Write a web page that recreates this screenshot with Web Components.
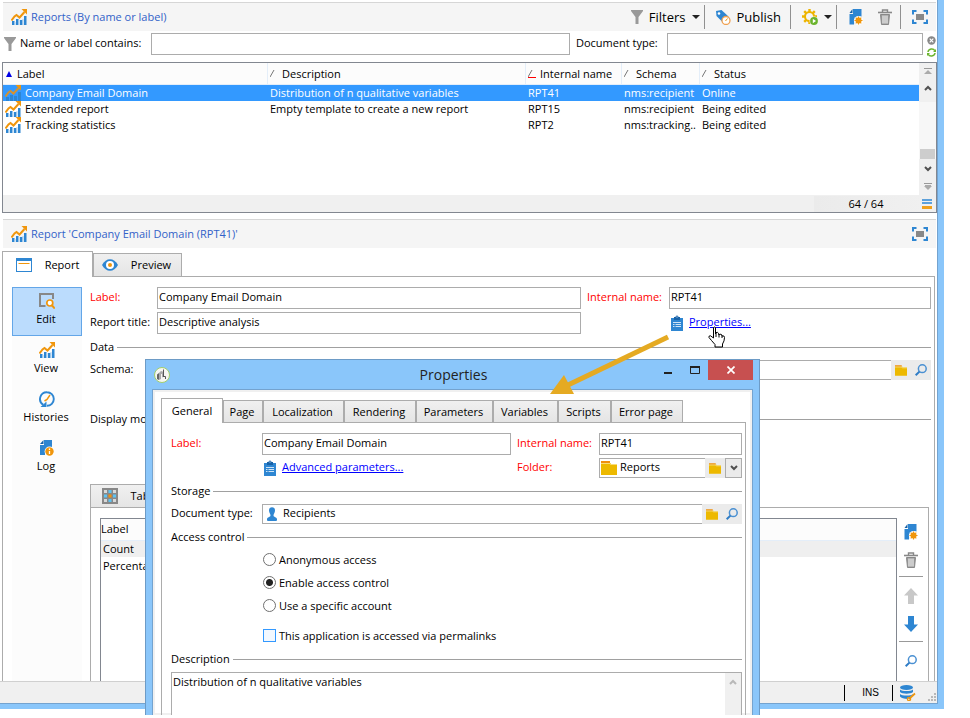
<!DOCTYPE html>
<html lang="en">
<head>
<meta charset="utf-8">
<title>Reports</title>
<style>
  html, body { margin: 0; height: 100%; background: #fff; }
  body { overflow: hidden; font: 11px/16px "Open Sans", "Noto Sans", sans-serif; color: #000; }
</style>
</head>
<body>
<report-app></report-app>

<script>
const ICONS = {
  chart: [16, 16, '<path d="M1 12h2.500v4H1zM5 10h2.500v6H5zM9 11h2.500v5H9zM13 7h2.500v9H13z" fill="#2e86d2"/><path d="M3.500 13h1v3h-1zM7.500 11h1v5h-1zM11.500 10h1v6h-1z" fill="#a9d0f0"/><path d="M.5 11.500 3.500 7.500 5.500 6 8.500 8.500 13.500 3" fill="none" stroke="#f0960c" stroke-width="2"/><path d="M10.500 0H16v5.500z" fill="#f0960c"/>'],
  chartsel: [16, 16, '<path d="M1 12h3v4H1zM5 10h3v6H5zM9 11h3v5H9zM13 7h3v9h-3z" fill="#2e86d2"/><path d="M.5 11.500 3.500 7.500 5.500 6 8.500 8.500 13.500 3" fill="none" stroke="#d8922c" stroke-width="2"/><path d="M10.500 0H16v5.500z" fill="#f0960c"/>'],
  funnel: [12, 14, '<path d="M0 0h12v1L7.500 7v7h-3V7L0 1z" fill="#999"/>'],
  tag: [16, 16, '<path d="M1 2 6.500 1 13.500 7.500 8 13.500 1.500 7z" fill="#2e86d2"/><circle cx="4" cy="4.500" r="1.300" fill="#fff"/><circle cx="11" cy="11.500" r="4" fill="#fff" stroke="#f0a050" stroke-width="1.300"/><path d="M10.500 12 12.500 9.500" stroke="#f0960c"/>'],
  gear: [16, 16, '<circle cx="7.500" cy="7.500" r="4.500" fill="none" stroke="#edb400" stroke-width="2"/><path d="M7.500 0v3M7.500 12v3M0 7.500h3M12 7.500h3M2.200 2.200l2 2M12.800 2.200l-2 2M2.200 12.800l2-2" stroke="#edb400" stroke-width="2.400"/><circle cx="12" cy="12" r="4.500" fill="#f5f5f5"/><circle cx="12" cy="12" r="3.900" fill="#6ab42d"/><path d="M10.800 9.800 14 12l-3.200 2.200z" fill="#fff"/>'],
  newdoc: [14, 16, '<path d="M4 0h8.500v7.500H9L5.500 10 5 15.500H.5V5H4z" fill="#2e86d2"/><path d="M.5 4 3.500 0v4z" fill="#1762a8"/><circle cx="9.500" cy="11.500" r="4.600" fill="#fff"/><circle cx="9.500" cy="11.500" r="3" fill="#f0960c"/><path d="M9.500 7.500v8M5.500 11.500h8M6.700 8.700l5.600 5.600M12.300 8.700l-5.600 5.600" stroke="#f0960c" stroke-width="1.200"/>'],
  trash: [14, 16, '<path d="M4.500 3V1h5v2" fill="none" stroke="#888" stroke-width="1.400"/><path d="M0 3.500h14" stroke="#888" stroke-width="1.600"/><path d="M2.500 5.500h9l-1 10h-7z" fill="#999" stroke="#888"/><path d="M5 6.500v8M7 6.500v8M9 6.500v8" stroke="#fff"/>'],
  full: [16, 14, '<path d="M1 4.500V1h3.500M11.500 1H15v3.500M15 9.500V13h-3.500M4.500 13H1V9.500" fill="none" stroke="#2e86d2" stroke-width="2"/><path d="M4 4h8v6H4z" fill="#888"/>'],
  clear: [9, 9, '<circle cx="4.500" cy="4.500" r="4.200" fill="#888"/><path d="m2.700 2.700 3.600 3.600M6.300 2.700 2.700 6.300" stroke="#fff" stroke-width="1.200"/>'],
  refresh: [9, 9, '<path d="M1 4C1.500.5 6.500 0 7.800 2.800M8 5C7.500 8.500 2.500 9 1.200 6.200" fill="none" stroke="#6ab42d" stroke-width="1.500"/><path d="M9 1v3H6zM0 8V5h3z" fill="#6ab42d"/>'],
  window: [16, 14, '<rect x=".5" y=".5" width="15" height="13" fill="#fff" stroke="#2e86d2"/><path d="M0 0h16v3H0z" fill="#2e86d2"/><path d="M2.500 5.500h11" stroke="#f0960c"/>'],
  eye: [16, 12, '<path d="M0 6C4-1.700 12-1.700 16 6 12 13.700 4 13.700 0 6z" fill="#2e86d2"/><circle cx="8" cy="6" r="4" fill="#fff"/><circle cx="8" cy="6" r="2" fill="#f0960c"/>'],
  editdoc: [16, 16, '<path d="M6.500 13H1V1h13v5" fill="none" stroke="#888" stroke-width="2"/><circle cx="10.800" cy="10" r="3" fill="#fff" stroke="#f0960c" stroke-width="1.700"/><path d="m13 12.500 2.800 3" stroke="#f0960c" stroke-width="2"/>'],
  history: [16, 16, '<path d="M4.300 13.800A6.800 6.800 0 0 1 8 1.200M8 1.200a6.800 6.800 0 0 1 0 13.600" fill="none" stroke="#2e86d2" stroke-width="1.900"/><path d="M1.500 16h6v-5.500z" fill="#2e86d2"/><path d="M11 4 8 8.500 5.500 10" fill="none" stroke="#f0960c" stroke-width="1.500"/>'],
  log: [14, 16, '<path d="M4 0h8v7H9L5.500 9.500 5 15H0V5h4z" fill="#2e86d2"/><path d="M0 4 3.500 0v4z" fill="#1762a8"/><circle cx="9.500" cy="11.500" r="4.900" fill="#fff"/><circle cx="9.500" cy="11.500" r="4.200" fill="#f0960c"/><path d="M9.500 8.500V10M9.500 11v3" stroke="#fff" stroke-width="1.300"/>'],
  clipboard: [12, 16, '<path d="M0 3h12v13H0z" fill="#2e86d2"/><path d="M3 2h1.500a1.500 1.500 0 0 1 3 0H9v3H3z" fill="#1762a8"/><path d="M5.500 1.500h1v1h-1z" fill="#fff"/><path d="M2 7.500h8M4.500 9.500H10M4.500 11.500H10M2 9.500h1.500M2 11.500h1.500" stroke="#cfe4f6"/>'],
  folder: [16, 14, '<path d="M0 0h9v2H0z" fill="#f0900c"/><path d="M0 2h10v1h6v11H0z" fill="#edb900"/><path d="M0 2.500h9.500v1H16" fill="none" stroke="#f8dc78"/>'],
  search: [12, 12, '<circle cx="7.300" cy="4.700" r="3.900" fill="none" stroke="#4a90d2" stroke-width="1.500"/><path d="M4.400 7.600.7 11.300" stroke="#2e7cc6" stroke-width="2"/>'],
  user: [10, 14, '<path d="M2 3.500a3 3.300 0 0 1 6 0C8 6 6.500 6.500 6.500 8.500c0 1.500 3 1.500 3.500 3.500V13q0 1-1 1H1q-1 0-1-1v-1C.5 10 3.500 10 3.500 8.500 3.500 6.500 2 6 2 3.500z" fill="#2e86d2"/>'],
  grid: [16, 16, '<path d="M0 0h16v16H0z" fill="#888"/><path d="M2 2h3v3H2zM11 2h3v3h-3zM2 11h3v3H2zM11 11h3v3h-3z" fill="#d8d8d8"/><path d="M6.500 2h3v3h-3zM2 6.500h3v3H2zM11 6.500h3v3h-3zM6.500 11h3v3h-3z" fill="#5cc4f4"/><path d="M6.500 6.500h3v3h-3z" fill="#f0900c"/>'],
  up: [14, 16, '<path d="M7 0l7 7.500h-4V16H4V7.500H0z" fill="#c8c8c8"/>'],
  down: [14, 16, '<path d="M7 16 0 8.500h4V0h6v8.500h4z" fill="#2e86d2"/>'],
  db: [16, 16, '<ellipse cx="6.500" cy="2.500" rx="6.500" ry="2.500" fill="#2e86d2"/><path d="M0 4.500c2 2 11 2 13 0v2.500c-2 2.300-11 2.300-13 0zM0 9c2 2 11 2 13 0v.5l-5 4.500C4 14 1 13 0 11.500z" fill="#2e86d2"/><path d="m9 14 6-5.500" stroke="#f0960c" stroke-width="1.700"/><circle cx="9" cy="14" r="1.600" fill="none" stroke="#f0960c" stroke-width="1.300"/>'],
  grip: [9, 9, '<path d="M6 0h2v2H6zM3 3h2v2H3zM6 3h2v2H6zM0 6h2v2H0zM3 6h2v2H3zM6 6h2v2H6z" fill="#b8b8b8"/>'],
  caret: [8, 4, '<path d="M0 0h8L4 4z" fill="#222"/>'],
  chevdown: [8, 6, '<path d="m1 1 3 3 3-3" fill="none" stroke="#505050" stroke-width="2"/>'],
  chevup: [8, 6, '<path d="m1 5 3-3 3 3" fill="none" stroke="#505050" stroke-width="2"/>'],
  chevupoff: [8, 6, '<path d="m1 5 3-3 3 3" fill="none" stroke="#b8b8b8" stroke-width="2"/>'],
  totop: [8, 6, '<path d="M0 .5h8" stroke="#999"/><path d="M0 6h8L4 2z" fill="#aaa"/>'],
  tobottom: [8, 7, '<path d="M0 .5h8" stroke="#999"/><path d="M1 2h6v1l1 0-4 4-4-4h1z" fill="#aaa"/>'],
  lines: [10, 10, '<path d="M0 1h10M0 4h10" stroke="#2e86d2" stroke-width="1.600"/><path d="M0 7h10v3H0z" fill="#f0a01c"/>'],
  sortasc: [6, 6, '<path d="M3 0l3 6H0z" fill="#0000e6"/>'],
  sort: [8, 8, '<path d="M0 7 4 0" stroke="#777"/>'],
  sortred: [8, 8, '<path d="M0 7 4 0" stroke="#777"/><path d="M0 7h8v1H0z" fill="#f00"/>'],
  app: [16, 16, '<circle cx="8" cy="8" r="7.500" fill="#f6f6f2" stroke="#a3cf6a"/><path d="M3 7.500 5 6v7l-2-1z" fill="#666"/><path d="M5 6q1-2 3-2l1 1v5l-1 .5V7H7v5l-2 1z" fill="#aaa"/><path d="M9.500 2.500V10M9 9.500h2.500V12" fill="none" stroke="#555"/>'],
  min: [8, 8, '<path d="M0 6h8v2H0z" fill="#222"/>'],
  max: [10, 8, '<path d="M.5 1h9v6.500h-9z" fill="none" stroke="#222"/><path d="M0 0h10v2H0z" fill="#222"/>'],
  close: [8, 8, '<path d="m.5.5 7 7M7.500.5l-7 7" stroke="#fff" stroke-width="1.700"/>'],
  hand: [18, 22, '<path d="M5.500 1.500q1.300-1 2 0V8l.5-1.500q2-.5 2.500.8L11 9q.5-1.500 2.500-.5l.5 1.500q2.500-.8 2.500 1.500 0 3.500-2 6.500v3H7v-2.500Q3 14 1 11.500.5 9.500 2.500 9.800L5.500 12z" fill="#fff" stroke="#000"/><path d="M8 7v4M11 8v3.500M14 9.500V12" stroke="#000"/>']
};

function define(name, html, setup) {
  const tpl = document.createElement('template');
  tpl.innerHTML = html;
  customElements.define(name, class extends HTMLElement {
    connectedCallback() {
      if (this.shadowRoot) return;
      const root = this.attachShadow({ mode: 'open' });
      root.append(tpl.content.cloneNode(true));
      if (setup) setup(this, root);
    }
  });
}
const BOX = '*, *::before { box-sizing: border-box; } button { font: inherit; color: inherit; border: 0; padding: 0; background: none; }';

define('app-icon', '<style>:host { display: inline-flex; flex: none; } svg { display: block; }</style>', (el, root) => {
  const [w, h, body] = ICONS[el.getAttribute('name')];
  const s = Number(el.getAttribute('width')) || w;
  root.innerHTML += `<svg width="${s}" height="${Math.round(h * s / w)}" viewBox="0 0 ${w} ${h}" aria-hidden="true">${body}</svg>`;
});

define('panel-bar', `<style>${BOX}
  :host { display: flex; align-items: center; height: 29px; margin: 0 1px 0 3px; padding: 0 8px; box-sizing: border-box; border-top: 1px solid #d6d6d6; background: #f5f5f5; }
  h2 { margin: 0 auto 0 4px; font: inherit; color: #3262c8; white-space: nowrap; }
  </style><app-icon name="chart"></app-icon><h2><slot></slot></h2><slot name="tools"></slot>`);

define('tool-button', `<style>${BOX}
  :host { display: flex; align-items: center; }
  button { display: flex; align-items: center; gap: 6px; height: 24px; font-size: 13px; white-space: nowrap; }
  </style><button type="button"></button>`, (el, root) => {
  const t = el.getAttribute('text') || '';
  const b = root.querySelector('button');
  b.innerHTML = `<app-icon name="${el.getAttribute('icon')}"></app-icon>${t ? `<span>${t}</span>` : ''}${el.hasAttribute('menu') ? '<app-icon name="caret"></app-icon>' : ''}`;
  if (!t) b.setAttribute('aria-label', el.getAttribute('label') || el.getAttribute('icon'));
});

define('text-field', `<style>${BOX}
  :host { display: flex; align-items: center; height: 22px; min-width: 0; }
  :host([slim]) { height: 20px; }
  label { flex: none; width: var(--label-width, auto); padding-bottom: 2px; white-space: nowrap; }
  :host([required]) label { color: #f00; }
  .box { flex: 1; min-width: 0; align-self: stretch; display: flex; align-items: center; border: 1px solid #acacac; background: #fff; }
  .box.joined { border-right: 0; }
  .box app-icon { margin-left: var(--icon-inset, 1px); }
  input { flex: 1; min-width: 0; width: 0; height: 18px; border: 0; outline: 0; padding: 0 2px 3px 1px; margin: 0; background: none; font: inherit; color: inherit; }
  .box app-icon + input { padding-left: var(--icon-gap, 3px); }
  .acts { align-self: stretch; display: flex; background: #ebebeb; }
  </style><label for="f"></label><div class="box"><input id="f" type="text"></div><div class="acts"><slot></slot></div>`, (el, root) => {
  root.querySelector('label').textContent = el.getAttribute('label');
  root.querySelector('input').value = el.getAttribute('value') || '';
  const box = root.querySelector('.box');
  if (el.children.length) box.classList.add('joined');
  if (el.hasAttribute('icon')) box.insertAdjacentHTML('afterbegin', `<app-icon name="${el.getAttribute('icon')}"></app-icon>`);
});

define('field-button', `<style>${BOX}
  :host { display: flex; }
  button { width: 20px; display: grid; place-items: center; }
  :host([boxed]) button { width: 17px; border: 1px solid #acacac; }
  </style><button type="button"></button>`, (el, root) => {
  const b = root.querySelector('button');
  b.setAttribute('aria-label', el.getAttribute('label'));
  b.innerHTML = `<app-icon name="${el.getAttribute('icon')}" width="${el.getAttribute('width') || ''}"></app-icon>`;
});

define('section-line', `<style>
  :host { display: flex; align-items: center; gap: 3px; height: 16px; white-space: nowrap; }
  :host::after { content: ""; flex: 1; border-top: 1px solid #a0a0a0; }
  </style><slot></slot>`);

define('icon-link', `<style>
  :host { display: flex; align-items: center; gap: 6px; height: 16px; }
  a { color: #00f; white-space: nowrap; padding-bottom: 2px; }
  </style><app-icon name="clipboard"></app-icon><a href="#"><slot></slot></a>`);

define('tab-item', `<style>${BOX}
  :host { display: flex; flex: 0 1 var(--w, auto); height: var(--tab-height, 23px); }
  :host([active]) { height: calc(var(--tab-height, 23px) + 3px); margin-bottom: -1px; position: relative; }
  button { flex: 1; display: flex; align-items: center; justify-content: center; gap: var(--tab-gap, 0); padding: 0 2px 0 0; white-space: nowrap; background: linear-gradient(#f0f0f0, #e5e5e5); border: 1px solid #acacac; border-bottom: 0; }
  :host([active]) button { background: #fff; padding: 0; }
  </style><button type="button" role="tab"><slot name="icon"></slot><span><slot></slot></span></button>`);

define('tab-strip', `<style>
  :host { display: flex; align-items: flex-end; border-bottom: 1px solid #acacac; }
  </style><slot></slot>`);

define('side-item', `<style>${BOX}
  :host { display: block; }
  button { width: 100%; height: 49px; display: flex; flex-direction: column; align-items: center; gap: 2px; padding: 5px 0 0; border: 1px solid transparent; }
  :host([active]) button { background: #bbdcfd; border-color: #63a6e8; }
  span { padding-right: 2px; }
  </style><button type="button"><slot name="icon"></slot><span><slot></slot></span></button>`);

define('choice-item', `<style>
  :host { display: flex; align-items: center; gap: 3px; height: 23px; }
  input { appearance: none; box-sizing: border-box; flex: none; width: 13px; height: 13px; margin: 0; border: 1px solid #707070; background: #fff; }
  input[type=radio] { border-radius: 50%; }
  input[type=radio]:checked { background: radial-gradient(circle, #222 0 3px, #fff 4px); }
  input[type=checkbox] { border-color: #3399ff; background: #f2f8ff; }
  label { white-space: nowrap; }
  </style><input id="c"><label for="c"><slot></slot></label>`, (el, root) => {
  const i = root.querySelector('input');
  i.type = el.getAttribute('type');
  i.checked = el.hasAttribute('checked');
});

define('report-list', `<style>${BOX}
  :host { display: flex; flex-direction: column; height: 151px; margin-left: 2px; box-sizing: border-box; border: 1px solid #828790; background: #fff; }
  .main { flex: 1; min-height: 0; display: flex; }
  .rows { flex: 1; min-width: 0; overflow: hidden; }
  table { width: 100%; table-layout: fixed; border-collapse: separate; border-spacing: 0; }
  th, td { padding: 0 0 0 3px; text-align: left; font-weight: normal; white-space: nowrap; overflow: hidden; }
  th { height: 22px; padding: 1px 0 0 2px; background: #fcfcfc; border-left: 1px solid #e4eef9; border-bottom: 1px solid #e4eef9; }
  th:first-child { border-left: 0; padding-left: 3px; }
  th div, .name { display: flex; align-items: center; gap: 4px; }
  th:first-child div { gap: 5px; }
  td { height: 16px; line-height: 16px; }
  td:first-child { padding-left: 2px; }
  .name { height: 16px; }
  tr.on td { background: #3399ff; color: #fff; }
  .scroll { width: 17px; background: #f0f0f0; display: flex; flex-direction: column; align-items: center; padding: 5px 0; }
  .track { flex: 1; width: 100%; margin: 11px 0 7px; background: #f7f7f7; display: flex; align-items: flex-end; }
  .thumb { width: 15px; height: 10px; margin-left: 1px; background: #cdcdcd; }
  .scroll app-icon + app-icon { margin-top: 11px; }
  .foot { height: 17px; background: #f0f0f0; display: flex; justify-content: flex-end; align-items: center; }
  .foot span { width: 108px; padding-right: 4px; text-align: center; background: linear-gradient(90deg, #ebebeb, #f0f0f0); }
  .foot app-icon { margin-right: 4px; }
  </style>
  <div class="main"><div class="rows"><table>
  <colgroup><col style="width:264px"><col style="width:258px"><col style="width:96px"><col style="width:78px"><col></colgroup>
  <thead><tr><th><div><app-icon name="sortasc"></app-icon>Label</div></th><th><div><app-icon name="sort"></app-icon>Description</div></th><th><div><app-icon name="sortred"></app-icon>Internal name</div></th><th><div><app-icon name="sort"></app-icon>Schema</div></th><th><div><app-icon name="sort"></app-icon>Status</div></th></tr></thead>
  <tbody>
  <tr class="on"><td><div class="name"><app-icon name="chartsel"></app-icon>Company Email Domain</div></td><td>Distribution of n qualitative variables</td><td>RPT41</td><td>nms:recipient</td><td>Online</td></tr>
  <tr><td><div class="name"><app-icon name="chart"></app-icon>Extended report</div></td><td>Empty template to create a new report</td><td>RPT15</td><td>nms:recipient</td><td>Being edited</td></tr>
  <tr><td><div class="name"><app-icon name="chart"></app-icon>Tracking statistics</div></td><td></td><td>RPT2</td><td>nms:tracking..</td><td>Being edited</td></tr>
  </tbody></table></div>
  <div class="scroll"><app-icon name="totop"></app-icon><app-icon name="chevup"></app-icon><div class="track"><div class="thumb"></div></div><app-icon name="chevdown"></app-icon><app-icon name="tobottom"></app-icon></div></div>
  <div class="foot"><span>64 / 64</span><app-icon name="lines"></app-icon></div>`);

define('values-panel', `<style>${BOX}
  :host { display: flex; flex-direction: column; min-height: 0; }
  .panel { flex: 1; display: flex; gap: 1px; border: 1px solid #acacac; border-width: 0 1px; padding: 10px 5px 0 9px; min-height: 0; }
  .list { flex: 1; border: 1px solid #828790; border-bottom: 0; }
  table { width: 100%; border-collapse: collapse; }
  th, td { text-align: left; font-weight: normal; padding: 0 2px; height: 17px; }
  th { height: 21px; padding: 0; background: #fcfcfc; border-bottom: 1px solid #e4eef9; }
  tbody tr:first-child { background: #efefef; }
  .tools { width: 25px; display: flex; flex-direction: column; align-items: center; }
  .tools tool-button { height: 28px; }
  hr { width: 24px; margin: 0; border: 0; border-top: 1px solid #999; }
  tab-strip { --tab-gap: 13px; }
  </style>
  <tab-strip><tab-item style="--w:82px"><app-icon slot="icon" name="grid"></app-icon>Table</tab-item></tab-strip>
  <div class="panel"><div class="list"><table><thead><tr><th>Label</th></tr></thead><tbody><tr><td>Count</td></tr><tr><td>Percentage</td></tr></tbody></table></div>
  <div class="tools"><tool-button icon="newdoc" label="Add"></tool-button><tool-button icon="trash" label="Delete"></tool-button><hr style="margin-top:2px">
  <tool-button icon="up" label="Move up" style="height:38px"></tool-button><tool-button icon="down" label="Move down" style="height:18px"></tool-button><hr style="margin-top:8px"><tool-button icon="search" label="Zoom" style="height:38px"></tool-button></div></div>`);

define('report-window', `<style>${BOX}
  :host { display: flex; flex-direction: column; min-height: 0; background: #fff; border: solid #8ac6fa; border-width: 0 6px 5px 0; }
  .inner { flex: 1; display: flex; flex-direction: column; min-height: 0; border: solid #74a3cf; border-width: 0 1px 1px 0; padding-top: 2px; }
  .sep { width: 1px; height: 24px; background: #909090; }
  .tools { display: flex; align-items: center; gap: 8px; }
  .filter { display: flex; align-items: center; height: 31px; padding: 0 1px 5px 4px; }
  .filter text-field:first-of-type { flex: 550 1 0; margin-left: 4px; --label-width: 131px; }
  .filter text-field:last-of-type { flex: 347 1 0; margin-left: 6px; --label-width: 91px; }
  .mini { display: flex; flex-direction: column; gap: 3px; margin: 4px 0 0 4px; }
  .mini button { display: flex; }
  tab-strip.top { margin: 3px 2px 0; --tab-gap: 13px; }
  .body { flex: 1; display: flex; min-height: 0; margin: 0 2px; border: 1px solid #acacac; border-width: 0 1px; padding: 10px 3px 0 9px; gap: 8px; overflow: hidden; }
  nav { width: 70px; background: #fcfcfc; flex: none; }
  .form { flex: 1; min-width: 0; display: flex; flex-direction: column; }
  .pair { display: grid; grid-template-columns: minmax(0, 491fr) minmax(0, 344fr); column-gap: 6px; row-gap: 3px; align-items: center; }
  .a { --label-width: 67px; } .b { --label-width: 82px; }
  values-panel { flex: 1; margin-right: 2px; margin-top: 57px; }
  .status { height: 22px; display: flex; align-items: center; justify-content: flex-end; background: #f0f0f0; border-top: 1px solid #d0d0d0; font: 10px "Liberation Sans", sans-serif; }
  .status i { width: 1px; height: 16px; background: #000; }
  .status span { width: 47px; text-align: center; padding-left: 4px; }
  </style>
  <div class="inner">
  <panel-bar>Reports (By name or label)<div slot="tools"><div class="tools"></div></div></panel-bar>
  <div class="filter"><app-icon name="funnel"></app-icon><text-field label="Name or label contains:"></text-field><text-field label="Document type:"></text-field>
   <div class="mini"><button type="button" aria-label="Clear"><app-icon name="clear"></app-icon></button><button type="button" aria-label="Refresh"><app-icon name="refresh"></app-icon></button></div></div>
  <report-list></report-list>
  <panel-bar style="margin-top:6px">Report 'Company Email Domain (RPT41)'<tool-button slot="tools" icon="full" label="Full screen"></tool-button></panel-bar>
  <tab-strip class="top"><tab-item active style="--w:91px"><app-icon slot="icon" name="window"></app-icon>Report</tab-item><tab-item style="--w:89px"><app-icon slot="icon" name="eye"></app-icon>Preview</tab-item></tab-strip>
  <div class="body">
   <nav><side-item active><app-icon slot="icon" name="editdoc"></app-icon>Edit</side-item><side-item><app-icon slot="icon" name="chart"></app-icon>View</side-item><side-item><app-icon slot="icon" name="history"></app-icon>Histories</side-item><side-item><app-icon slot="icon" name="log"></app-icon>Log</side-item></nav>
   <div class="form">
    <div class="pair"><text-field class="a" required label="Label:" value="Company Email Domain"></text-field><text-field class="b" required label="Internal name:" value="RPT41"></text-field>
    <text-field class="a" label="Report title:" value="Descriptive analysis"></text-field><icon-link style="padding-left:84px">Properties...</icon-link></div>
    <section-line style="margin-top:5px">Data</section-line>
    <text-field slim class="a" label="Schema:" style="margin-top:5px"><field-button icon="folder" width="12" label="Choose folder"></field-button><field-button icon="search" label="Open"></field-button></text-field>
    <section-line style="margin-top:31px">Display mode</section-line>
    <values-panel></values-panel>
   </div>
  </div>
  <div class="status"><i></i><span>INS</span><i></i><app-icon name="db" style="margin:0 12px 0 7px"></app-icon><app-icon name="grip" style="align-self:flex-end;margin-bottom:1px"></app-icon></div>
  </div>`, (el, root) => {
  root.querySelector('.tools').innerHTML = '<tool-button icon="funnel" text="Filters" menu></tool-button><div class="sep" style="margin-left:-4px"></div><tool-button icon="tag" text="Publish" style="margin-left:2px"></tool-button><div class="sep" style="margin:0 3px 0 1px"></div><tool-button icon="gear" label="Actions" menu></tool-button><div class="sep" style="margin-left:-4px"></div><tool-button icon="newdoc" label="New" style="padding:0 7px 0 4px"></tool-button><tool-button icon="trash" label="Delete"></tool-button><div class="sep"></div><tool-button icon="full" label="Full screen" style="margin-left:3px"></tool-button>';
});

define('properties-dialog', `<style>${BOX}
  :host { display: flex; flex-direction: column; box-sizing: border-box; background: #8ac6fa; border: 1px solid #6d9bc6; border-bottom: 0; padding: 0 6px; overflow: hidden; }
  header { flex: none; height: 29px; display: grid; grid-template-columns: 1fr auto 1fr; align-items: center; padding-left: 2px; }
  header h1 { margin: 0; font: 14px/20px "Open Sans", sans-serif; color: #222; }
  .win { justify-self: end; align-self: start; display: flex; align-items: center; gap: 18px; }
  .win button { display: flex; }
  .win .x { width: 45px; height: 20px; background: #c75050; align-items: center; justify-content: center; margin-left: -10px; }
  main { flex: 1; min-height: 0; display: flex; flex-direction: column; background: #fff; border: 1px solid #74a3cf; border-bottom: 0; padding: 8px 6px 0 8px; box-shadow: inset 0 0 0 2px #f0f0f0; }
  main tab-strip { --tab-height: 22px; }
  .page { flex: 1; min-height: 0; display: flex; flex-direction: column; border: 1px solid #acacac; border-width: 0 1px; padding: 10px 3px 0 9px; }
  .pair { display: grid; grid-template-columns: minmax(0, 340fr) minmax(0, 225fr); column-gap: 6px; row-gap: 3px; align-items: center; }
  .a { --label-width: 91px; } .b { --label-width: 82px; }
  .choices { padding: 3px 0 0 92px; }
  .area { flex: 1; min-height: 40px; display: flex; border: 1px solid #acacac; border-bottom: 0; margin-top: 5px; }
  textarea { flex: 1; border: 0; outline: 0; resize: none; padding: 1px; margin: 0; font: inherit; color: inherit; overflow: hidden; }
  .bar { width: 16px; background: #f0f0f0; display: flex; justify-content: center; padding-top: 6px; }
  </style>
  <header><app-icon name="app"></app-icon><h1>Properties</h1><div class="win"><button type="button" aria-label="Minimize"><app-icon name="min"></app-icon></button><button type="button" aria-label="Maximize"><app-icon name="max"></app-icon></button><button type="button" class="x" aria-label="Close"><app-icon name="close"></app-icon></button></div></header>
  <main>
   <tab-strip><tab-item active style="--w:62px">General</tab-item><tab-item style="--w:40px">Page</tab-item><tab-item style="--w:81px">Localization</tab-item><tab-item style="--w:72px">Rendering</tab-item><tab-item style="--w:77px">Parameters</tab-item><tab-item style="--w:65px">Variables</tab-item><tab-item style="--w:53px">Scripts</tab-item><tab-item style="--w:72px">Error page</tab-item></tab-strip>
   <div class="page">
    <div class="pair"><text-field class="a" required label="Label:" value="Company Email Domain"></text-field><text-field class="b" required label="Internal name:" value="RPT41"></text-field>
     <icon-link style="padding-left:93px">Advanced parameters...</icon-link>
     <text-field slim class="b" required label="Folder:" value="Reports" icon="folder"><field-button icon="folder" width="12" label="Choose folder"></field-button><field-button boxed icon="chevdown" label="Recent folders"></field-button></text-field></div>
    <section-line style="margin-top:5px">Storage</section-line>
    <text-field slim class="a" label="Document type:" value="Recipients" icon="user" style="margin-top:5px;--icon-inset:4px;--icon-gap:6px"><field-button icon="folder" width="12" label="Choose folder"></field-button><field-button icon="search" label="Open"></field-button></text-field>
    <section-line style="margin-top:5px">Access control</section-line>
    <div class="choices"><choice-item type="radio">Anonymous access</choice-item><choice-item type="radio" checked>Enable access control</choice-item><choice-item type="radio">Use a specific account</choice-item><choice-item type="checkbox" style="margin-top:7px">This application is accessed via permalinks</choice-item></div>
    <section-line style="margin-top:4px">Description</section-line>
    <div class="area"><textarea aria-label="Description">Distribution of n qualitative variables</textarea><div class="bar"><app-icon name="chevupoff"></app-icon></div></div>
   </div>
  </main>`);

define('report-app', `<style>
  :host { display: grid; position: relative; height: 100vh; overflow: hidden; padding: 0 26px 9px 0; box-sizing: border-box; }
  properties-dialog { position: absolute; left: 145px; right: 210px; top: 359px; bottom: 3px; }
  .arrow { position: absolute; left: 550px; top: 334px; }
  .cursor { position: absolute; left: 708px; top: 326px; }
  </style>
  <report-window></report-window>
  <properties-dialog></properties-dialog>
  <svg class="arrow" width="120" height="62" viewBox="0 0 120 62" aria-hidden="true"><path d="M118 3 18 51" stroke="#e5aa22" stroke-width="5"/><path d="M0 60 14 41l10 19z" fill="#e5aa22"/></svg>
  <app-icon class="cursor" name="hand"></app-icon>`);
</script>
</body>
</html>
